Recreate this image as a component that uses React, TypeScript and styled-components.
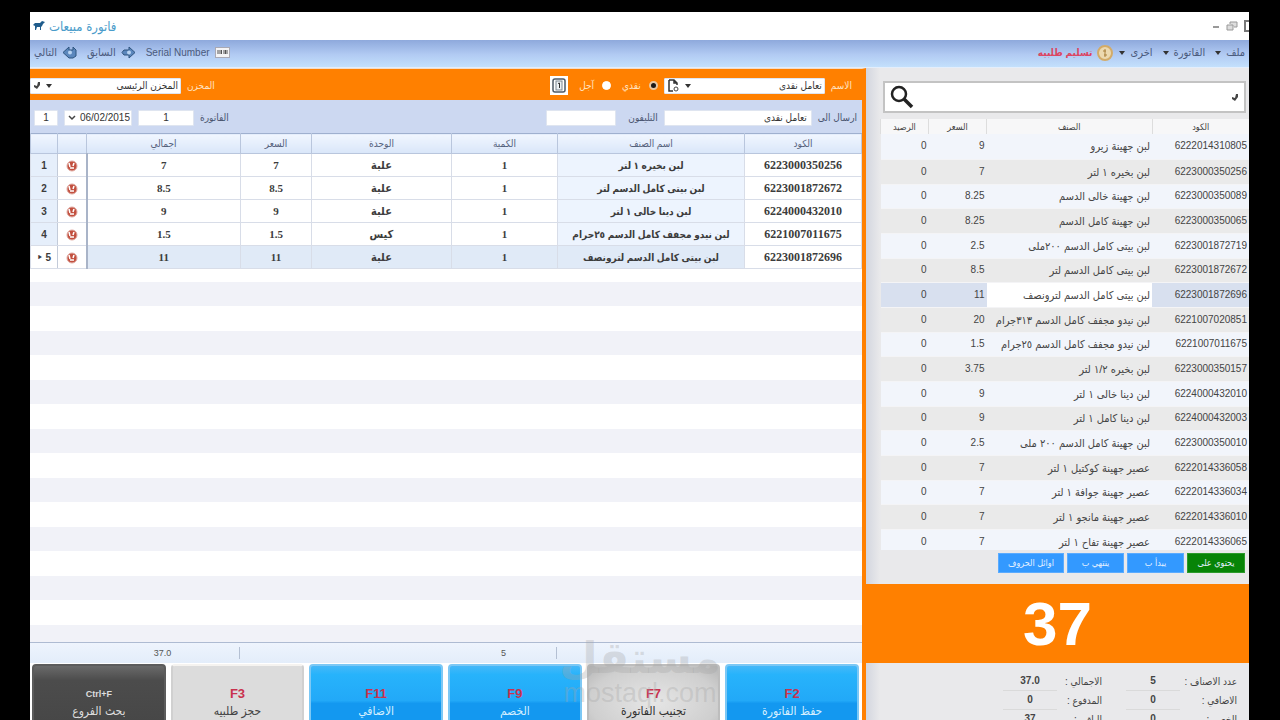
import React from 'react';
import styled, { createGlobalStyle, css } from 'styled-components';

const sans = '"Liberation Sans", "DejaVu Sans Condensed", "DejaVu Sans", sans-serif';
const serif = '"Liberation Serif", "DejaVu Sans Condensed", "DejaVu Sans", serif';
const orange = '#ff8000';

const GlobalStyle = createGlobalStyle`
  * { box-sizing: border-box; }
  body { margin: 0; background: #000; }
  button, input, select { font: inherit; color: inherit; margin: 0; }
`;

const Screen = styled.div`
  height: 100vh;
  padding: 12px 31px 0 30px;
  overflow: hidden;
  background: #000;
  font-family: ${sans};
  font-size: 11px;
  color: #444;
`;

const Window = styled.div`
  position: relative;
  height: 100%;
  display: flex;
  flex-direction: column;
  background: #fff;
  overflow: hidden;
`;

const TitleBar = styled.header`
  flex: 0 0 28px;
  display: flex;
  align-items: center;
  justify-content: space-between;
  padding-left: 3px;
`;

const Title = styled.h1`
  display: flex;
  align-items: center;
  gap: 4px;
  margin: 0;
  font-size: 13px;
  font-weight: normal;
  color: #4a9cca;
`;

const WindowControls = styled.div`
  display: flex;
  align-items: center;
  gap: 6px;
  margin-right: -5px;
`;

const WindowButton = styled.button`
  display: flex;
  padding: 0;
  border: 0;
  background: none;
`;

const MenuBar = styled.nav`
  flex: 0 0 28px;
  display: flex;
  align-items: center;
  gap: 10px;
  padding: 0 4px 2px;
  background: linear-gradient(#8ea9dc, #b2cbf3 55%, #c3e0fc);
  border-bottom: 1px solid #e4eefb;
`;

const MenuItem = styled.button<{ $alert?: boolean; $small?: boolean }>`
  display: flex;
  align-items: center;
  gap: 5px;
  padding: 0;
  border: 0;
  background: none;
  white-space: nowrap;
  font-size: ${p => (p.$alert || p.$small ? 10 : 11)}px;
  font-weight: ${p => (p.$alert ? 'bold' : 'normal')};
  color: ${p => (p.$alert ? '#dc4562' : '#4a5a7c')};
`;

const MenuGroup = styled.div`
  display: flex;
  align-items: center;
  gap: 6px;
`;

const Spacer = styled.div`
  flex: 1;
`;

const Workspace = styled.div`
  flex: 1;
  min-height: 0;
  display: flex;
`;

/* ---- invoice side ---- */

const Invoice = styled.main`
  flex: 1;
  min-width: 0;
  display: flex;
  flex-direction: column;
  border-top: 1px solid #f0dccb;
  border-right: 4px solid ${orange};
`;

const FormRow = styled.div<{ $accent?: boolean }>`
  flex: 0 0 ${p => (p.$accent ? 31 : 33)}px;
  display: flex;
  align-items: center;
  gap: 6px;
  padding-right: ${p => (p.$accent ? 10 : 5)}px;
  padding-left: ${p => (p.$accent ? 0 : 4)}px;
  padding-top: 2px;
  background: ${p => (p.$accent ? orange : '#ccd8f1')};
  color: ${p => (p.$accent ? '#ffe3c2' : '#4a5570')};
  font-size: 10px;
`;

const FieldLabel = styled.label<{ $w: number }>`
  flex: 0 0 ${p => p.$w}px;
  white-space: nowrap;
`;

const boxed = css`
  height: 16px;
  padding: 0 4px;
  border: 1px solid #dfe5f0;
  border-radius: 1px;
  background: #fff;
  color: #333;
  font-size: 10px;
`;

const TextField = styled.input<{ $w: number; $center?: boolean }>`
  ${boxed}
  width: ${p => p.$w}px;
  text-align: ${p => (p.$center ? 'center' : 'right')};
`;

const Combo = styled.div<{ $w: number; $tight?: boolean }>`
  ${boxed}
  width: ${p => p.$w}px;
  display: flex;
  align-items: center;
  gap: ${p => (p.$tight ? 2 : 5)}px;
  padding: ${p => (p.$tight ? '0 1px 0 3px' : '0 2px')};
`;

const Picker = styled.select`
  flex: 1;
  min-width: 0;
  height: 14px;
  padding: 0;
  border: 0;
  outline: 0;
  appearance: none;
  background: none;
`;

const Choice = styled.label`
  display: flex;
  align-items: center;
  gap: 8px;
`;

const Radio = styled.input`
  appearance: none;
  width: 9px;
  height: 9px;
  border-radius: 50%;
  border: 1px solid #fff;
  background: #fff;
  &:checked { background: #1a1a1a; border: 2px solid #e9c8a4; }
`;

const Choices = styled.div`
  display: flex;
  align-items: center;
  gap: 11px;
`;

const PageButton = styled.button`
  display: flex;
  align-items: center;
  justify-content: center;
  width: 18px;
  height: 19px;
  padding: 0;
  border: 0;
  background: #fff;
`;

const Grid = styled.table`
  width: 100%;
  border-collapse: collapse;
  table-layout: fixed;
  font-family: ${serif};
`;

const GridHead = styled.th<{ $w?: number }>`
  width: ${p => (p.$w ? `${p.$w}px` : 'auto')};
  height: 20px;
  padding: 0;
  border: 1px solid #b9c6dd;
  border-top-color: #9fb0cf;
  background: linear-gradient(#f1f6ff, #d9e6f9);
  font-size: 10px;
  font-weight: normal;
  color: #56627c;
`;

const GridRow = styled.tr<{ $active?: boolean }>`
  background: ${p => (p.$active ? '#e0eaf7' : '#fff')};
`;

const GridCell = styled.td<{ $kind?: 'name' | 'number' | 'code' | 'delete' }>`
  height: 23px;
  padding: 0;
  border: 1px solid #d8dde8;
  text-align: center;
  white-space: nowrap;
  font-size: 11px;
  font-weight: bold;
  color: #3c3c3c;
  ${p => p.$kind === 'name' && css`background: #edf4fe; font-size: 10px; ${GridRow}:last-child & { background: #e0eaf7; }`}
  ${p => p.$kind === 'code' && css`background: #fff; font-size: 12px;`}
  ${p => p.$kind === 'delete' && css`background: #fff; border-left-color: #c3cbd9; border-right: 2px solid #a9b4c8;`}
  ${p => p.$kind === 'number' && css`background: #e6effb; font-family: ${sans}; font-size: 10px; ${GridRow}:last-child & { background: #fff; }`}
`;

const DeleteButton = styled.button`
  display: inline-flex;
  padding: 0;
  border: 0;
  background: none;
  vertical-align: middle;
`;

const EmptyRows = styled.div`
  flex: 1;
  min-height: 0;
  background: repeating-linear-gradient(#fff 0 25px, #f1f2f8 25px 49px);
  background-position: 0 -12px;
  background-size: 100% 1200px;
`;

const Totals = styled.div`
  flex: 0 0 21px;
  display: flex;
  align-items: center;
  border-top: 1px solid #aebbd2;
  background: linear-gradient(#eef4fd, #e3edfa);
  font-size: 9px;
  color: #555;
`;

const TotalCell = styled.div<{ $w?: number; $line?: boolean }>`
  flex: ${p => (p.$w ? `0 0 ${p.$w}px` : '1')};
  height: 12px;
  line-height: 12px;
  text-align: center;
  border-right: ${p => (p.$line ? '1px solid #b4c0d3' : '0')};
`;

const Actions = styled.div`
  flex: 0 0 57px;
  display: grid;
  grid-template-columns: repeat(6, 1fr);
  gap: 5px;
  padding: 1px 3px 0 2px;
  overflow: hidden;
`;

const tones = {
  blue: css`
    background: linear-gradient(#45b8f8, #27b3fb 12%, #22a9f8 48%, #1398f0 52%, #1398f0);
    border: 2px solid #7cc8f5;
    color: #d5efff;
  `,
  silver: css`
    background: radial-gradient(ellipse at center, #e6e6e6, #cfcfcf 70%, #b5b5b5);
    border: 2px solid #bdbdbd;
    color: #333;
  `,
  light: css`
    background: #dcdcdc;
    border: 2px solid #d0d0d0;
    border-top-color: #f5f3f0;
    color: #444;
  `,
  dark: css`
    background: linear-gradient(#6a6a6a, #4c4c4c 20%, #454545);
    border: 2px solid #5c5c5c;
    color: #ddd;
  `,
};

const ActionButton = styled.button<{ $tone: keyof typeof tones }>`
  height: 76px;
  display: flex;
  flex-direction: column;
  align-items: center;
  padding: 19px 0 0;
  border-radius: 4px;
  font-size: 12px;
  line-height: 17px;
  ${p => tones[p.$tone]}
`;

const KeyName = styled.span<{ $small?: boolean }>`
  font-size: ${p => (p.$small ? 9 : 13)}px;
  font-weight: bold;
  line-height: 18px;
  color: ${p => (p.$small ? '#ddd' : '#c9324e')};
`;

/* ---- product side ---- */

const Products = styled.aside`
  flex: 0 0 383px;
  min-width: 0;
  display: flex;
  flex-direction: column;
  background: linear-gradient(90deg, #d3d6df, #e9e9eb 14px);
`;

const SearchBox = styled.div`
  flex: 0 0 32px;
  display: flex;
  align-items: center;
  flex-direction: row-reverse;
  margin: 13px 3px 6px 17px;
  padding: 0 5px;
  border: 2px solid #c3c3c3;
  background: #fff;
`;

const SearchInput = styled.input`
  flex: 1;
  min-width: 0;
  border: 0;
  outline: 0;
  background: none;
  font-size: 12px;
`;

const ListFrame = styled.div`
  flex: 0 0 431px;
  margin-left: 14px;
  overflow: hidden;
`;

const List = styled.table`
  width: 100%;
  border-collapse: collapse;
  table-layout: fixed;
  font-size: 10px;
`;

const ListHead = styled.th<{ $w?: number }>`
  width: ${p => (p.$w ? `${p.$w}px` : 'auto')};
  height: 15px;
  padding: 0;
  border-left: 1px solid #ddd;
  background: #f7f7f8;
  font-size: 9px;
  font-weight: normal;
`;

const ListRow = styled.tr<{ $active?: boolean }>`
  height: 25px;
  &:nth-child(3n) { height: 24px; }
  background: ${p => (p.$active ? '#d8e0ef' : '#f2f5fb')};
  border-bottom: 1px solid #f4f4f6;
  &:nth-child(even) { background: #eaeaea; }
`;

const ListCell = styled.td<{ $name?: boolean; $edit?: boolean }>`
  padding: 0 2px;
  text-align: right;
  white-space: nowrap;
  line-height: 16px;
  font-size: ${p => (p.$name ? 11 : 10)}px;
  background: ${p => (p.$edit ? '#fff' : 'transparent')};
`;

const Filters = styled.div`
  flex: 0 0 34px;
  display: flex;
  gap: 3px;
  padding: 3px 4px 0;
`;

const FilterButton = styled.button<{ $w: number; $on?: boolean }>`
  width: ${p => p.$w}px;
  height: 20px;
  padding: 0;
  border: 1px solid ${p => (p.$on ? '#2c9a2c' : '#5aabff')};
  background: ${p => (p.$on ? '#078407' : '#3399ff')};
  color: #e2f0ff;
  font-size: 9px;
`;

const GrandTotal = styled.output`
  flex: 0 0 79px;
  display: flex;
  align-items: center;
  justify-content: center;
  background: ${orange};
  color: #fff;
  font-size: 62px;
  font-weight: bold;
`;

const Summary = styled.dl`
  flex: 1;
  min-height: 0;
  display: grid;
  grid-template-columns: 57px 54px 69px 54px;
  grid-auto-rows: 19px;
  margin: 0;
  padding: 9px 12px 0 0;
  overflow: hidden;
  font-size: 10px;
`;

const Term = styled.dt`
  line-height: 19px;
  white-space: nowrap;
  &:nth-of-type(even) { padding-right: 24px; }
`;

const Value = styled.dd`
  margin: 0;
  line-height: 18px;
  text-align: center;
  font-weight: bold;
  border-bottom: 1px solid #dadada;
`;

const Watermark = styled.div`
  position: absolute;
  left: 532px;
  bottom: 14px;
  width: 156px;
  display: flex;
  flex-direction: column;
  align-items: center;
  direction: ltr;
  pointer-events: none;
  color: rgba(165, 165, 165, 0.32);
`;

const WatermarkName = styled.div`
  font-family: "DejaVu Sans", sans-serif;
  font-size: 44px;
  font-weight: bold;
  line-height: 44px;
`;

const WatermarkSite = styled.div`
  font-size: 27px;
  line-height: 26px;
`;

const Caret = () => (
  <svg width="6" height="4" viewBox="0 0 6 4" aria-hidden="true"><path d="M0 0h6L3 4z" fill="#333" /></svg>
);

const Chevron = () => (
  <svg width="8" height="6" viewBox="0 0 8 6" aria-hidden="true">
    <path d="M1 1l3 3 3-3" fill="none" stroke="#444" strokeWidth="1.500" />
  </svg>
);

const BirdIcon = () => (
  <svg width="12" height="10" viewBox="0 0 12 10" aria-hidden="true">
    <path d="M0 4l2-2 5 0 2-2 3 1-2 2-1 2-1 1v3H7V6H4L3 9H2V5z" fill="#1f5c8c" />
  </svg>
);

const StepIcon = ({ back }: { back?: boolean }) => (
  <svg width="15" height="13" viewBox="0 0 15 13" aria-hidden="true">
    <path
      d={back ? 'M14 6.500L8 1v3H3L1 6.500 3 9h5v3z' : 'M1 6.500L7 1v3h4V1l3 3v6l-3 2H7z'}
      fill="#5b87bd" stroke="#2f547f"
    />
    <circle cx="8" cy="6.500" r="2" fill="#b9d4f2" />
  </svg>
);

const CoinIcon = () => (
  <svg width="16" height="16" viewBox="0 0 16 16" aria-hidden="true">
    <circle cx="8" cy="8" r="7" fill="#ecd9b0" stroke="#d3ab68" strokeWidth="2" />
    <path d="M8 4v8M6 6h3M7 10h3" stroke="#a9803d" fill="none" />
  </svg>
);

const SerialIcon = () => (
  <svg width="15" height="11" viewBox="0 0 15 11" aria-hidden="true">
    <rect x="0.500" y="0.500" width="14" height="10" fill="#f4f4f6" stroke="#a9a9b4" />
    <path d="M3 3v4M5 3v4M6.500 3v4M9 3v4M10.500 3v4M12 3v4" stroke="#555" />
  </svg>
);

const AddPageIcon = () => (
  <svg width="13" height="13" viewBox="0 0 13 13" aria-hidden="true">
    <path d="M2 1h5l3 3v2M2 1v11h4M7 1v3h3" fill="none" stroke="#333" strokeWidth="1.500" />
    <circle cx="9" cy="10" r="2" fill="#fff" stroke="#444" />
  </svg>
);

const DocIcon = () => (
  <svg width="14" height="15" viewBox="0 0 14 15" aria-hidden="true">
    <rect x="1" y="1" width="12" height="13" rx="2" fill="#fff" stroke="#4d5a66" strokeWidth="1.500" />
    <rect x="4" y="3" width="6" height="9" fill="#eef2f5" stroke="#7d8892" />
    <path d="M6 5.500l1.500-.5v5" fill="none" stroke="#333" />
  </svg>
);

const DeleteIcon = () => (
  <svg width="12" height="12" viewBox="0 0 12 12" aria-hidden="true">
    <circle cx="6" cy="6" r="5" fill="#c2503f" stroke="#e0aaa2" />
    <path d="M3 3l1 4M8 3L7 6M4 8h4" stroke="#fff" strokeWidth="1.500" />
  </svg>
);

const PenIcon = () => (
  <svg width="8" height="9" viewBox="0 0 8 9" aria-hidden="true">
    <path d="M5 1h2v3L4 8 1 6V4l3 1z" fill="#444" />
  </svg>
);

const SearchIcon = () => (
  <svg width="24" height="24" viewBox="0 0 24 24" aria-hidden="true">
    <circle cx="9" cy="9" r="7" fill="none" stroke="#222" strokeWidth="2.500" />
    <path d="M14 14l8 8" stroke="#222" strokeWidth="3.500" />
  </svg>
);

const lines = [
  ['6223000350256', 'لبن بخيره ١ لتر', '1', 'علبة', '7', '7'],
  ['6223001872672', 'لبن بيتى كامل الدسم لتر', '1', 'علبة', '8.5', '8.5'],
  ['6224000432010', 'لبن دينا خالى ١ لتر', '1', 'علبة', '9', '9'],
  ['6221007011675', 'لبن نيدو مجفف كامل الدسم ٢٥جرام', '1', 'كيس', '1.5', '1.5'],
  ['6223001872696', 'لبن بيتى كامل الدسم لترونصف', '1', 'علبة', '11', '11'],
];

const products = [
  ['6222014310805', 'لبن جهينة زيرو', '9'],
  ['6223000350256', 'لبن بخيره ١ لتر', '7'],
  ['6223000350089', 'لبن جهينة خالى الدسم', '8.25'],
  ['6223000350065', 'لبن جهينة كامل الدسم', '8.25'],
  ['6223001872719', 'لبن بيتى كامل الدسم ٢٠٠ملى', '2.5'],
  ['6223001872672', 'لبن بيتى كامل الدسم لتر', '8.5'],
  ['6223001872696', 'لبن بيتى كامل الدسم لترونصف', '11'],
  ['6221007020851', 'لبن نيدو مجفف كامل الدسم ٣١٣جرام', '20'],
  ['6221007011675', 'لبن نيدو مجفف كامل الدسم ٢٥جرام', '1.5'],
  ['6223000350157', 'لبن بخيره ١/٢ لتر', '3.75'],
  ['6224000432010', 'لبن دينا خالى ١ لتر', '9'],
  ['6224000432003', 'لبن دينا كامل ١ لتر', '9'],
  ['6223000350010', 'لبن جهينة كامل الدسم ٢٠٠ ملى', '2.5'],
  ['6222014336058', 'عصير جهينة كوكتيل ١ لتر', '7'],
  ['6222014336034', 'عصير جهينة جوافة ١ لتر', '7'],
  ['6222014336010', 'عصير جهينة مانجو ١ لتر', '7'],
  ['6222014336065', 'عصير جهينة تفاح ١ لتر', '7'],
];

const actions: { key: string; label: string; tone: keyof typeof tones }[] = [
  { key: 'F2', label: 'حفظ الفاتورة', tone: 'blue' },
  { key: 'F7', label: 'تجنيب الفاتورة', tone: 'silver' },
  { key: 'F9', label: 'الخصم', tone: 'blue' },
  { key: 'F11', label: 'الاضافي', tone: 'blue' },
  { key: 'F3', label: 'حجز طلبيه', tone: 'light' },
  { key: 'Ctrl+F', label: 'بحث الفروع', tone: 'dark' },
];

const summary = [
  ['عدد الاصناف :', '5'],
  ['الاجمالي :', '37.0'],
  ['الاضافي :', '0'],
  ['المدفوع :', '0'],
  ['الخصم :', '0'],
  ['الباقي :', '37'],
];

export default function App() {
  return (
    <Screen dir="rtl" lang="ar">
      <GlobalStyle />
      <Window>
        <TitleBar>
          <WindowControls>
            <WindowButton aria-label="إغلاق">
              <svg width="10" height="12"><rect x="1" y="1" width="8" height="10" fill="none" stroke="#777" strokeWidth="2" /></svg>
            </WindowButton>
            <WindowButton aria-label="استعادة">
              <svg width="12" height="10"><path d="M1 4h6v5H1zM4 3V1h7v5H8" fill="#ddd" stroke="#999" /></svg>
            </WindowButton>
            <WindowButton aria-label="تصغير">
              <svg width="8" height="10"><path d="M1 6h6" stroke="#999" strokeWidth="2" /></svg>
            </WindowButton>
          </WindowControls>
          <Title>فاتورة مبيعات<BirdIcon /></Title>
        </TitleBar>

        <MenuBar>
          <MenuItem>ملف <Caret /></MenuItem>
          <MenuItem>الفاتورة <Caret /></MenuItem>
          <MenuGroup>
            <MenuItem>اخرى <Caret /></MenuItem>
            <MenuItem $alert><CoinIcon />تسليم طلبيه</MenuItem>
          </MenuGroup>
          <Spacer />
          <MenuItem $small><SerialIcon />Serial Number</MenuItem>
          <MenuItem><StepIcon back />السابق</MenuItem>
          <MenuItem><StepIcon />التالي</MenuItem>
        </MenuBar>

        <Workspace>
          <Products>
            <SearchBox>
              <SearchIcon />
              <SearchInput aria-label="بحث عن صنف" />
              <PenIcon />
            </SearchBox>
            <ListFrame>
              <List>
                <thead>
                  <tr>
                    <ListHead $w={97}>الكود</ListHead>
                    <ListHead>الصنف</ListHead>
                    <ListHead $w={58}>السعر</ListHead>
                    <ListHead $w={48}>الرصيد</ListHead>
                  </tr>
                </thead>
                <tbody>
                  {products.map(([code, name, price], i) => (
                    <ListRow key={code} $active={i === 6}>
                      <ListCell>{code}</ListCell>
                      <ListCell $name $edit={i === 6}>{name}</ListCell>
                      <ListCell>{price}</ListCell>
                      <ListCell>0</ListCell>
                    </ListRow>
                  ))}
                </tbody>
              </List>
            </ListFrame>
            <Filters>
              <FilterButton $w={58} $on>يحتوي على</FilterButton>
              <FilterButton $w={57}>يبدأ ب</FilterButton>
              <FilterButton $w={57}>ينتهي ب</FilterButton>
              <FilterButton $w={66}>اوائل الحروف</FilterButton>
            </Filters>
            <GrandTotal>37</GrandTotal>
            <Summary>
              {summary.map(([term, value]) => (
                <React.Fragment key={term}>
                  <Term>{term}</Term>
                  <Value>{value}</Value>
                </React.Fragment>
              ))}
            </Summary>
          </Products>

          <Invoice>
            <FormRow $accent>
              <FieldLabel $w={20} htmlFor="customer">الاسم</FieldLabel>
              <Combo $w={161}>
                <Picker id="customer"><option>تعامل نقدى</option></Picker>
                <Caret />
                <AddPageIcon />
              </Combo>
              <Choices>
                <Choice><Radio type="radio" name="pay" defaultChecked />نقدي</Choice>
                <Choice><Radio type="radio" name="pay" />آجل</Choice>
                <PageButton aria-label="كشف حساب"><DocIcon /></PageButton>
              </Choices>
              <Spacer />
              <FieldLabel $w={26} htmlFor="store">المخزن</FieldLabel>
              <Combo $w={151}>
                <Picker id="store"><option>المخزن الرئيسى</option></Picker>
                <Caret />
                <PenIcon />
              </Combo>
            </FormRow>
            <FormRow>
              <FieldLabel $w={38} htmlFor="send">ارسال الى</FieldLabel>
              <TextField id="send" $w={148} defaultValue="تعامل نقدى" />
              <FieldLabel $w={36} htmlFor="phone">التليفون</FieldLabel>
              <TextField id="phone" $w={70} />
              <Spacer />
              <FieldLabel $w={26} htmlFor="invoice">الفاتورة</FieldLabel>
              <TextField id="invoice" $w={56} $center defaultValue="1" />
              <Combo $w={68} $tight>
                <Picker aria-label="التاريخ"><option>06/02/2015</option></Picker>
                <Chevron />
              </Combo>
              <TextField aria-label="رقم" $w={24} $center defaultValue="1" />
            </FormRow>

            <Grid>
              <thead>
                <tr>
                  <GridHead $w={117}>الكود</GridHead>
                  <GridHead>اسم الصنف</GridHead>
                  <GridHead $w={106}>الكمية</GridHead>
                  <GridHead $w={140}>الوحدة</GridHead>
                  <GridHead $w={71}>السعر</GridHead>
                  <GridHead $w={154}>اجمالي</GridHead>
                  <GridHead $w={29} aria-label="حذف" />
                  <GridHead $w={27} aria-label="رقم السطر" />
                </tr>
              </thead>
              <tbody>
                {lines.map(([code, name, qty, unit, price, total], i) => (
                  <GridRow key={code} $active={i === 4}>
                    <GridCell $kind="code">{code}</GridCell>
                    <GridCell $kind="name">{name}</GridCell>
                    <GridCell>{qty}</GridCell>
                    <GridCell>{unit}</GridCell>
                    <GridCell>{price}</GridCell>
                    <GridCell>{total}</GridCell>
                    <GridCell $kind="delete"><DeleteButton aria-label="حذف السطر"><DeleteIcon /></DeleteButton></GridCell>
                    <GridCell $kind="number">{i + 1}{i === 4 && ' ‣'}</GridCell>
                  </GridRow>
                ))}
              </tbody>
            </Grid>
            <EmptyRows />
            <Totals>
              <TotalCell />
              <TotalCell $w={106} $line>5</TotalCell>
              <TotalCell $w={211} />
              <TotalCell $w={154} $line>37.0</TotalCell>
              <TotalCell $w={56} />
            </Totals>
            <Actions>
              {actions.map(a => (
                <ActionButton key={a.key} $tone={a.tone}>
                  <KeyName $small={a.tone === 'dark'}>{a.key}</KeyName>
                  {a.label}
                </ActionButton>
              ))}
            </Actions>
          </Invoice>
        </Workspace>
        <Watermark>
          <WatermarkName>مستقل</WatermarkName>
          <WatermarkSite>mostaql.com</WatermarkSite>
        </Watermark>
      </Window>
    </Screen>
  );
}
